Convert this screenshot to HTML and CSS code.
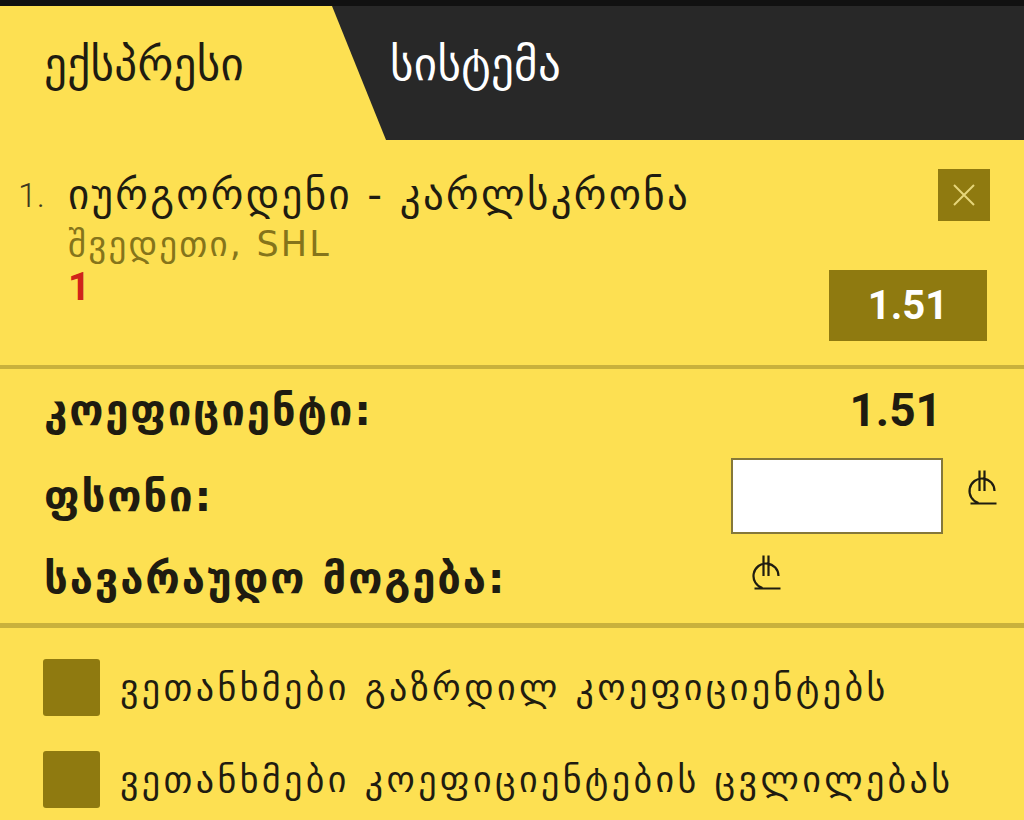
FILE: index.html
```html
<!DOCTYPE html>
<html lang="ka">
<head>
  <meta charset="UTF-8" />
  <meta name="viewport" content="width=device-width, initial-scale=1.0"/>
  <title>ბილეთი</title>
  <link rel="stylesheet" href="styles.css">
</head>
<body>
  <div class="topline"></div>
  <div class="tabs">
    <div class="tab tab-active">ექსპრესი</div>
    <div class="tab tab-dark">სისტემა</div>
  </div>

  <div class="bet">
    <div class="bet-num">1.</div>
    <div class="bet-info">
      <div class="bet-title">იურგორდენი - კარლსკრონა</div>
      <div class="bet-league">შვედეთი, SHL</div>
      <div class="bet-pick">1</div>
    </div>
    <div class="bet-side">
      <button class="close-btn">
        <svg width="24" height="24" viewBox="0 0 24 24"><path d="M2 2L22 22M22 2L2 22" stroke="#e6d67a" stroke-width="2"/></svg>
      </button>
      <div class="odd-btn">1.51</div>
    </div>
  </div>

  <div class="summary">
    <div class="row row-odd">
      <span class="label">კოეფიციენტი:</span>
      <span class="total-odd">1.51</span>
    </div>
    <div class="row row-stake">
      <span class="label">ფსონი:</span>
      <div class="stake">
        <input type="text" class="stake-input" />
        <span class="lari">
          <svg width="32" height="36" viewBox="0 0 32 36"><path d="M28.5 22A12.5 12.5 0 1 0 12.5 34M4.5 34.5H30.5M13.5 1.5V22M18.5 1.5V22" fill="none" stroke="#1f1c10" stroke-width="2.2"/></svg>
        </span>
      </div>
    </div>
    <div class="row row-win">
      <span class="label">სავარაუდო მოგება:</span>
      <span class="lari win-lari">
        <svg width="32" height="36" viewBox="0 0 32 36"><path d="M28.5 22A12.5 12.5 0 1 0 12.5 34M4.5 34.5H30.5M13.5 1.5V22M18.5 1.5V22" fill="none" stroke="#1f1c10" stroke-width="2.2"/></svg>
      </span>
    </div>
  </div>

  <div class="options">
    <label class="check"><span class="box"></span>ვეთანხმები გაზრდილ კოეფიციენტებს</label>
    <label class="check"><span class="box"></span>ვეთანხმები კოეფიციენტების ცვლილებას</label>
  </div>
</body>
</html>
```

FILE: styles.css
```css
:root {
  --yellow: #fde052;
  --dark: #282828;
  --olive: #8f7a10;
  --line: #c9b13c;
  --text: #1f1c10;
}

body {
  margin: 0;
  background-color: var(--yellow);
  color: var(--text);
  font-family: 'DejaVu Sans', Roboto, sans-serif;
  width: 1024px;
  height: 820px;
  overflow: hidden;
}

.topline {
  height: 6px;
  background-color: #111;
}

.tabs {
  display: flex;
  height: 134px;
  background-color: var(--dark);
}

.tab {
  font-size: 45px;
  line-height: 118px;
  letter-spacing: 0.3px;
}

.tab-active {
  width: 386px;
  padding-left: 44px;
  box-sizing: border-box;
  background-color: var(--yellow);
  clip-path: polygon(0 0, 332px 0, 386px 100%, 0 100%);
}

.tab-dark {
  color: #fff;
  padding-left: 4px;
}

.bet {
  display: flex;
  padding: 33px 37px 0 18px;
  height: 229px;
  box-sizing: border-box;
  border-bottom: 4px solid var(--line);
}

.bet-num {
  font-family: Roboto, sans-serif;
  font-weight: 300;
  font-size: 34px;
  line-height: 44px;
  width: 50px;
  color: #3d3820;
}

.bet-info {
  flex: 1;
}

.bet-title {
  font-size: 41px;
  line-height: 44px;
  letter-spacing: 2.3px;
}

.bet-league {
  font-size: 35px;
  line-height: 54px;
  letter-spacing: 2.2px;
  color: #85741b;
}

.bet-pick {
  font-family: Roboto, sans-serif;
  font-weight: bold;
  font-size: 39px;
  line-height: 32px;
  color: #d0241a;
}

.bet-side {
  display: flex;
  flex-direction: column;
  align-items: flex-end;
  gap: 49px;
  margin-top: -4px;
}

.close-btn {
  width: 52px;
  height: 52px;
  margin-right: -3px;
  border: none;
  background-color: var(--olive);
  padding: 0;
  display: flex;
  align-items: center;
  justify-content: center;
}

.odd-btn {
  width: 158px;
  height: 71px;
  background-color: var(--olive);
  color: #fff;
  font-family: Roboto, sans-serif;
  font-weight: bold;
  font-size: 40px;
  line-height: 71px;
  text-align: center;
}

.summary {
  padding: 0 26px 8px 44px;
  border-bottom: 5px solid var(--line);
}

.row {
  display: flex;
  align-items: center;
}

.row-odd {
  height: 82px;
}

.row-stake {
  height: 90px;
}

.row-win {
  height: 74px;
}

.label {
  flex: 1;
  font-weight: bold;
  font-size: 42px;
  letter-spacing: 1.8px;
}

.total-odd {
  font-family: Roboto, sans-serif;
  font-weight: bold;
  font-size: 46px;
  margin-right: 56px;
}

.stake {
  display: flex;
  align-items: center;
  gap: 23px;
}

.stake-input {
  width: 212px;
  height: 76px;
  box-sizing: border-box;
  border: 2px solid #85783a;
  background-color: #fff;
}

.lari {
  display: flex;
  padding-bottom: 18px;
}

.win-lari {
  flex: 0 0 248px;
  padding-bottom: 12px;
}

.options {
  padding: 31px 0 0 43px;
  display: flex;
  flex-direction: column;
  gap: 35px;
}

.check {
  display: flex;
  align-items: center;
  gap: 20px;
  font-size: 36px;
  letter-spacing: 3.4px;
}

.box {
  flex: none;
  width: 57px;
  height: 57px;
  border-radius: 3px;
  background-color: var(--olive);
}
```
